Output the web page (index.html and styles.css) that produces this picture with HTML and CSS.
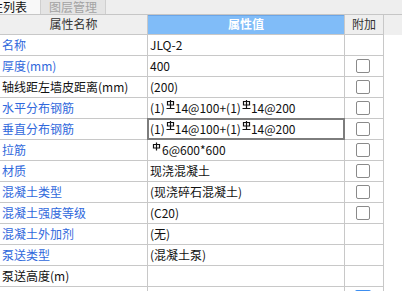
FILE: index.html
```html
<!DOCTYPE html>
<html lang="zh">
<head>
<meta charset="utf-8">
<link rel="stylesheet" href="styles.css">
</head>
<body>
<div class="tabs">
  <div class="tab tab-active"><span>属性列表</span></div>
  <div class="tab tab-idle">图层管理</div>
</div>
<div class="grid head">
  <div class="cell hc">属性名称</div>
  <div class="cell hc hc-blue">属性值</div>
  <div class="cell hc">附加</div>
</div>
<div class="grid row"><div class="cell name">名称</div><div class="cell val">JLQ-2</div><div class="cell add"></div></div>
<div class="grid row"><div class="cell name">厚度(mm)</div><div class="cell val">400</div><div class="cell add"><i class="cb"></i></div></div>
<div class="grid row"><div class="cell name black">轴线距左墙皮距离(mm)</div><div class="cell val">(200)</div><div class="cell add"><i class="cb"></i></div></div>
<div class="grid row"><div class="cell name">水平分布钢筋</div><div class="cell val">(1)<svg class="rb" viewBox="0 0 9 9"><path d="M1.5 1.5h6v3.5h-6z M4.5 0v8.5 M0.5 8.5h8" fill="none" stroke="#111" stroke-width="1.2"/></svg>14@100+(1)<svg class="rb" viewBox="0 0 9 9"><path d="M1.5 1.5h6v3.5h-6z M4.5 0v8.5 M0.5 8.5h8" fill="none" stroke="#111" stroke-width="1.2"/></svg>14@200</div><div class="cell add"><i class="cb"></i></div></div>
<div class="grid row"><div class="cell name">垂直分布钢筋</div><div class="cell val sel">(1)<svg class="rb" viewBox="0 0 9 9"><path d="M1.5 1.5h6v3.5h-6z M4.5 0v8.5 M0.5 8.5h8" fill="none" stroke="#111" stroke-width="1.2"/></svg>14@100+(1)<svg class="rb" viewBox="0 0 9 9"><path d="M1.5 1.5h6v3.5h-6z M4.5 0v8.5 M0.5 8.5h8" fill="none" stroke="#111" stroke-width="1.2"/></svg>14@200</div><div class="cell add"><i class="cb"></i></div></div>
<div class="grid row"><div class="cell name">拉筋</div><div class="cell val"><svg class="rb rb2" viewBox="0 0 9 9"><path d="M1.5 2.5h6v3.5h-6z M4.5 0.5v8" fill="none" stroke="#111" stroke-width="1.2"/></svg>6@600*600</div><div class="cell add"><i class="cb"></i></div></div>
<div class="grid row"><div class="cell name">材质</div><div class="cell val">现浇混凝土</div><div class="cell add"><i class="cb"></i></div></div>
<div class="grid row"><div class="cell name">混凝土类型</div><div class="cell val">(现浇碎石混凝土)</div><div class="cell add"><i class="cb"></i></div></div>
<div class="grid row"><div class="cell name">混凝土强度等级</div><div class="cell val">(C20)</div><div class="cell add"><i class="cb"></i></div></div>
<div class="grid row"><div class="cell name">混凝土外加剂</div><div class="cell val">(无)</div><div class="cell add"></div></div>
<div class="grid row"><div class="cell name">泵送类型</div><div class="cell val">(混凝土泵)</div><div class="cell add"></div></div>
<div class="grid row"><div class="cell name black">泵送高度(m)</div><div class="cell val"></div><div class="cell add"></div></div>
<div class="grid row"><div class="cell name"></div><div class="cell val"></div><div class="cell add"><i class="cb cb-blue"></i></div></div>
</body>
</html>
```

FILE: styles.css
```css
html, body {
  margin: 0;
  padding: 0;
}
body {
  width: 402px;
  height: 291px;
  overflow: hidden;
  background: #ffffff;
  font-family: "Noto Sans CJK SC", "Microsoft YaHei", sans-serif;
  font-size: 12px;
  color: #111;
}
.tabs {
  display: flex;
  height: 14px;
  background: #eeeeee;
  border-bottom: 1px solid #c6c6c6;
}
.tab {
  display: flex;
  align-items: flex-start;
  line-height: 13px;
  height: 14px;
  white-space: nowrap;
  overflow: hidden;
  box-sizing: border-box;
  border-right: 1px solid #cfcfcf;
}
.tab-active {
  width: 41px;
  justify-content: flex-end;
  padding-right: 13px;
  background: #f8f8f8;
  color: #111;
}
.tab-idle {
  width: 65px;
  justify-content: center;
  background: #e4e4e4;
  color: #a3a3a3;
}
.grid {
  display: grid;
  grid-template-columns: 148px 197px 39px;
}
.head {
  height: 20px;
  background: #efefef;
}
.hc {
  box-sizing: border-box;
  border-right: 1px solid #cdcdcd;
  border-bottom: 1px solid #cdcdcd;
  text-align: center;
  line-height: 18px;
  color: #333;
}
.hc-blue {
  background: #80bcf8;
  color: #ffffff;
  font-weight: bold;
  border-right-color: #6ba5e6;
  border-bottom-color: #6ba5e6;
  box-shadow: inset 0 1px 0 #6ba5e6;
}
.row {
  height: 21px;
}
.cell {
  box-sizing: border-box;
  border-right: 1px solid #c8c8c8;
  border-bottom: 1px solid #c8c8c8;
  white-space: nowrap;
  overflow: visible;
}
.name {
  padding-left: 2px;
  line-height: 20px;
  color: #3068dc;
}
.name.black {
  color: #111;
}
.val {
  padding-left: 2px;
  line-height: 20px;
  color: #111;
  position: relative;
}
.sel::after {
  content: "";
  position: absolute;
  top: -1px;
  left: -1px;
  right: -1px;
  bottom: -1px;
  border: 2px solid #7d7d7d;
}
.rb {
  width: 9px;
  height: 9px;
  vertical-align: 4px;
  margin: 0 0 0 1px;
}
.rb2 {
  margin: 0 1px 0 2px;
}
.add {
  display: flex;
  justify-content: center;
  align-items: flex-start;
  padding-top: 3px;
  padding-right: 2px;
}
.cb {
  display: block;
  width: 12px;
  height: 12px;
  border: 1px solid #8a8a8a;
  border-radius: 2px;
  background: #fff;
}
.cb-blue {
  border-color: #3d8ef0;
  border-width: 2px;
}
```
